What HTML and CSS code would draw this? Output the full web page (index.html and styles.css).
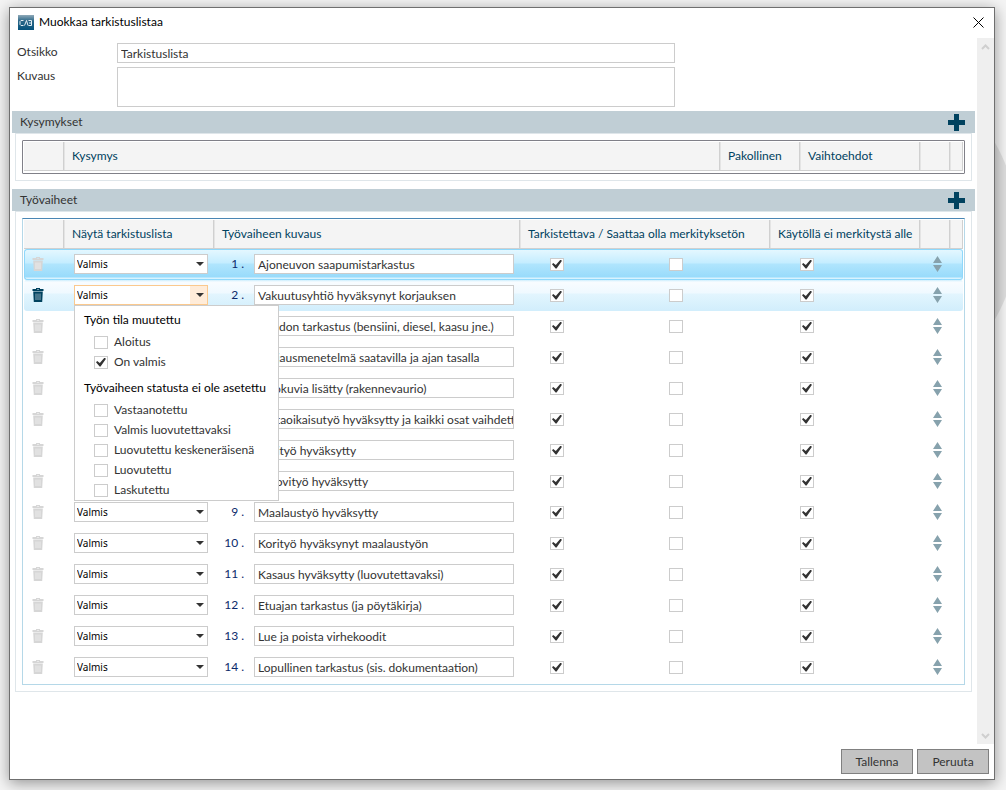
FILE: index.html
```html
<!DOCTYPE html>
<html lang="fi">
<head>
<meta charset="UTF-8">
<meta name="viewport" content="width=device-width, initial-scale=1">
<title>Muokkaa tarkistuslistaa</title>
<link rel="stylesheet" href="styles.css">
</head>
<body>
<svg class="symbols" aria-hidden="true">
  <symbol id="i-trash" viewBox="0 0 12 14">
    <path fill="currentColor" fill-rule="evenodd" d="M4 0h4v1h3.500v2H.500V1H4zM5 1v.600h2V1zM1.200 3.500h9.600L10.200 14H1.800z"/>
    <path stroke="#fff" stroke-opacity=".55" d="M4 5.500v6.500M6 5.500v6.500M8 5.500v6.500"/>
  </symbol>
  <symbol id="i-sort" viewBox="0 0 9 16">
    <path fill="currentColor" d="M4.500 0L9 7H0zM0 9h9L4.500 16z"/>
  </symbol>
  <symbol id="i-plus" viewBox="0 0 17 17">
    <path fill="currentColor" d="M6 0h5v6h6v5h-6v6H6v-6H0V6h6z"/>
  </symbol>
</svg>

<main class="dialog">
  <header class="titlebar">
    <svg class="logo" viewBox="0 0 16 15" aria-hidden="true">
      <defs>
        <linearGradient id="logo-bg" x1="0" y1="0" x2="0" y2="1">
          <stop offset="0" stop-color="#8fa9b8"/>
          <stop offset=".4" stop-color="#2b6788"/>
          <stop offset="1" stop-color="#04527b"/>
        </linearGradient>
      </defs>
      <rect width="16" height="15" fill="url(#logo-bg)"/>
      <path fill="none" stroke="#e4eef3" d="M5.500 5.500H3L2 6.500v3l1 1h2.500M6.500 10.500l2-5 1.500 5M10.500 5.500h3v5h-3M11 8h2.500"/>
    </svg>
    <h1>Muokkaa tarkistuslistaa</h1>
    <button class="close" type="button" aria-label="Sulje">
      <svg viewBox="0 0 11 11" width="11" height="11"><path stroke="#000" d="M.5.5l10 10M10.500.500l-10 10"/></svg>
    </button>
  </header>

  <div class="body">
    <div class="content">
      <form class="fields">
        <label for="otsikko">Otsikko</label>
        <input id="otsikko" type="text" value="Tarkistuslista">
        <label for="kuvaus">Kuvaus</label>
        <textarea id="kuvaus"></textarea>
      </form>

      <section class="section">
        <div class="section-head">
          <h2>Kysymykset</h2>
          <button class="add" type="button" aria-label="Lisää kysymys"><svg><use href="#i-plus"/></svg></button>
        </div>
        <div class="group">
          <div class="grid-box dark">
            <table>
              <colgroup>
                <col class="w40"><col><col class="w80"><col class="w120"><col class="w30"><col class="w13">
              </colgroup>
              <thead>
                <tr><th></th><th>Kysymys</th><th>Pakollinen</th><th>Vaihtoehdot</th><th></th><th></th></tr>
              </thead>
            </table>
          </div>
        </div>
      </section>

      <section class="section">
        <div class="section-head">
          <h2>Työvaiheet</h2>
          <button class="add" type="button" aria-label="Lisää työvaihe"><svg><use href="#i-plus"/></svg></button>
        </div>
        <div class="group">
          <div class="grid-box">
            <table>
              <colgroup>
                <col class="w40"><col class="w150"><col><col class="w250"><col class="w150"><col class="w30"><col class="w13">
              </colgroup>
              <thead>
                <tr><th></th><th>Näytä tarkistuslista</th><th>Työvaiheen kuvaus</th><th>Tarkistettava / Saattaa olla merkityksetön</th><th>Käytöllä ei merkitystä alle</th><th></th><th></th></tr>
              </thead>
              <tbody id="steps"></tbody>
            </table>
          </div>
        </div>
      </section>
    </div>

    <div class="scrollbar" aria-hidden="true">
      <svg viewBox="0 0 9 6" width="9" height="6"><path d="M1 5l3.500-3.500L8 5"/></svg>
      <svg viewBox="0 0 9 6" width="9" height="6"><path d="M1 1l3.500 3.500L8 1"/></svg>
    </div>
  </div>

  <footer class="footer">
    <button type="button">Tallenna</button>
    <button type="button">Peruuta</button>
  </footer>
</main>

<template id="status-menu">
  <div class="menu">
    <fieldset>
      <legend>Työn tila muutettu</legend>
      <label><input type="checkbox">Aloitus</label>
      <label><input type="checkbox" checked>On valmis</label>
    </fieldset>
    <fieldset>
      <legend>Työvaiheen statusta ei ole asetettu</legend>
      <label><input type="checkbox">Vastaanotettu</label>
      <label><input type="checkbox">Valmis luovutettavaksi</label>
      <label><input type="checkbox">Luovutettu keskeneräisenä</label>
      <label><input type="checkbox">Luovutettu</label>
      <label><input type="checkbox">Laskutettu</label>
    </fieldset>
  </div>
</template>

<script>
  const steps = [
    'Ajoneuvon saapumistarkastus',
    'Vakuutusyhtiö hyväksynyt korjauksen',
    'Vuodon tarkastus (bensiini, diesel, kaasu jne.)',
    'Korjausmenetelmä saatavilla ja ajan tasalla',
    'Valokuvia lisätty (rakennevaurio)',
    'Mittaoikaisutyö hyväksytty ja kaikki osat vaihdettu',
    'Korityö hyväksytty',
    'Muovityö hyväksytty',
    'Maalaustyö hyväksytty',
    'Korityö hyväksynyt maalaustyön',
    'Kasaus hyväksytty (luovutettavaksi)',
    'Etuajan tarkastus (ja pöytäkirja)',
    'Lue ja poista virhekoodit',
    'Lopullinen tarkastus (sis. dokumentaation)'
  ];
  const selectedRow = 1;
  const openRow = 2;
  const tbody = document.getElementById('steps');

  steps.forEach((text, i) => {
    const n = i + 1;
    const tr = document.createElement('tr');
    if (n === selectedRow) tr.className = 'selected';
    if (n === openRow) tr.className = 'active';
    tr.innerHTML = `
      <td><button class="trash" type="button" aria-label="Poista ${n}"><svg><use href="#i-trash"/></svg></button></td>
      <td><div class="combo"><select id="tila-${n}" aria-label="Näytä tarkistuslista ${n}"><option>Valmis</option></select></div></td>
      <td><div class="desc"><label for="kuvaus-${n}">${n} .</label><input id="kuvaus-${n}" type="text" value="${text}"></div></td>
      <td><div class="checks"><input type="checkbox" checked aria-label="Tarkistettava ${n}"><input type="checkbox" aria-label="Saattaa olla merkityksetön ${n}"></div></td>
      <td><div class="checks"><input type="checkbox" checked aria-label="Käytöllä ei merkitystä ${n}"></div></td>
      <td><button class="sort" type="button" aria-label="Siirrä ${n}"><svg><use href="#i-sort"/></svg></button></td>
      <td></td>`;
    tbody.appendChild(tr);
  });

  // pudotusvalikko avoimelle riville
  const menu = document.getElementById('status-menu').content.cloneNode(true);
  document.querySelector('.active .combo').appendChild(menu);
</script>
</body>
</html>
```
FILE: styles.css
```css
* {
  box-sizing: border-box;
}
body {
  margin: 0;
  padding: 7px 11px 10px 9px;
  min-height: 100vh;
  background: radial-gradient(circle 178px at calc(100% - 165px) 231px, #dedede 177px, #f4f4f4 178px);
  font: 12px/16px Lato, "Noto Sans", sans-serif;
  color: #333;
}
input, textarea, button, select {
  font: inherit;
  color: inherit;
  margin: 0;
}
button {
  padding: 0;
  border: 0;
  background: none;
}
svg {
  display: block;
}
.symbols {
  position: absolute;
  width: 0;
  height: 0;
}
.dialog {
  display: flex;
  flex-direction: column;
  min-height: calc(100vh - 17px);
  border: 1px solid #6f6f6f;
  background: #fff;
  box-shadow: 0 3px 14px rgba(0,0,0,0.4);
}

/* title */
.titlebar {
  display: flex;
  align-items: center;
  height: 30px;
  padding: 0 10px 2px 8px;
}
.logo {
  width: 16px;
  height: 15px;
  margin-right: 5px;
}
h1 {
  flex: 1;
  margin: 0;
  font-size: 12px;
  font-weight: 400;
  color: #000;
}

.body {
  flex: 1;
  display: flex;
}
.content {
  flex: 1;
  min-width: 0;
  padding: 5px 2px 0;
}
.scrollbar {
  display: flex;
  flex-direction: column;
  justify-content: space-between;
  align-items: center;
  width: 17px;
  padding: 6px 0 5px;
  background: #efefef;
}
.scrollbar path {
  fill: none;
  stroke: #cfcfcf;
  stroke-width: 2;
}

/* form fields */
.fields {
  display: grid;
  grid-template-columns: 100px 1fr;
  row-gap: 4px;
  margin-bottom: 4px;
  padding-left: 5px;
}
.fields label {
  padding-top: 1px;
}
input[type="text"], textarea {
  height: 20px;
  padding: 0 0 0 3px;
  border: 1px solid #ccc;
  border-radius: 0;
  background: #fff;
}
.fields input, .fields textarea {
  width: 100%;
  max-width: 558px;
}
textarea {
  display: block;
  height: 40px;
  resize: none;
}

/* sections */
.section {
  margin-bottom: 8px;
}
.section-head {
  display: flex;
  align-items: center;
  justify-content: space-between;
  height: 22px;
  padding: 0 10px 0 8px;
  background: #c0ced5;
}
h2 {
  margin: 0;
  font-size: 12px;
  font-weight: 400;
}
.add {
  color: #00425f;
}
.add svg {
  width: 17px;
  height: 17px;
}
.group {
  margin: 0 3px;
  padding: 6px;
  border: 1px solid #dfe6ea;
}
.grid-box {
  padding: 1px;
  border: 1px solid #b5d8e8;
  border-top-color: #4a86b4;
}
.grid-box.dark {
  padding-bottom: 2px;
  border-color: #808088;
  border-radius: 1px;
}

table {
  width: 100%;
  table-layout: fixed;
  border-spacing: 0;
}
.w13 { width: 13px; }
.w30 { width: 30px; }
.w40 { width: 40px; }
.w80 { width: 80px; }
.w120 { width: 120px; }
.w150 { width: 150px; }
.w250 { width: 250px; }
th {
  height: 29px;
  padding: 0 0 0 8px;
  border-right: 1px solid #d0d0d0;
  border-bottom: 1px solid #d0d0d0;
  background: #f4f4f4;
  font-weight: 400;
  text-align: left;
  white-space: nowrap;
  color: #00425f;
}
th + th {
  box-shadow: inset 1px 0 #e4e4e4;
}
td {
  height: 31px;
  padding: 0 0 1px;
}

/* highlighted rows */
.selected td {
  border: solid #8fd8fb;
  border-width: 1px 0;
  background: linear-gradient(#e4f7ff 0, #c4edff 13px, #b0e5fd 14px, #98dbfb 27px, #d8f3ff 28px);
}
.selected td:first-child {
  border-left-width: 1px;
  border-radius: 3px 0 0 3px;
}
.selected td:last-child {
  border-right-width: 1px;
  border-radius: 0 3px 3px 0;
}
.active td {
  background: linear-gradient(#cdeefd 0, #f8fcff 2px, #eff9ff 13px, #e2f5fe 14px, #d2eefc 30px);
}
.active td:first-child {
  border-radius: 3px 0 0 3px;
}
.active td:last-child {
  border-radius: 0 3px 3px 0;
}

.trash, .sort {
  display: block;
  margin: 0 auto;
}
.trash {
  margin-left: 8px;
  color: #d6d6d6;
}
.selected .trash {
  margin-left: 7px;
}
.active .trash {
  color: #00425f;
}
.trash svg {
  width: 12px;
  height: 14px;
}
.sort {
  padding-left: 4px;
  color: #87a2ad;
}
.sort svg {
  width: 9px;
  height: 16px;
}

.combo {
  position: relative;
  width: 134px;
  margin-left: 10px;
}
.combo select {
  display: block;
  width: 100%;
  height: 20px;
  padding: 0 2px;
  border: 1px solid #ccc;
  border-radius: 0;
  background: #fff;
  appearance: none;
  font: 10px "Noto Sans", sans-serif;
  color: #000;
}
.combo::after {
  content: "";
  position: absolute;
  top: 8px;
  right: 4px;
  border: solid transparent;
  border-width: 4px 4px 0;
  border-top-color: #333;
}
.active select {
  border-color: #fbc98e;
  background: linear-gradient(to right, #fff 115px, #ffecd9 115px);
}

/* drop-down menu */
.menu {
  position: absolute;
  z-index: 1;
  top: 100%;
  left: 0;
  width: 205px;
  padding: 4px 0 0 9px;
  border: 1px solid #ccc;
  background: #fff;
}
fieldset {
  margin: 0;
  padding: 0;
  border: 0;
}
fieldset + fieldset {
  margin-top: 6px;
}
legend {
  margin-bottom: 2px;
  padding: 0;
  line-height: 20px;
  white-space: nowrap;
  color: #000;
}
.menu label {
  display: flex;
  align-items: center;
  gap: 6px;
  height: 20px;
  padding-left: 10px;
}

.desc {
  display: flex;
  align-items: center;
  padding-right: 6px;
}
.desc label {
  width: 30px;
  margin-right: 10px;
  text-align: right;
  color: #0b2a6b;
}
.desc input {
  flex: 1;
  min-width: 0;
}

.checks {
  display: flex;
  gap: 105px;
  padding-left: 30px;
}
input[type="checkbox"] {
  appearance: none;
  flex: none;
  width: 14px;
  height: 13px;
  padding: 1px;
  border: 1px solid #ccc;
  background: #fff;
}
input[type="checkbox"]:checked::before {
  content: "";
  display: block;
  width: 10px;
  height: 9px;
  background: #333;
  clip-path: polygon(0 52%, 12% 38%, 38% 62%, 84% 2%, 100% 14%, 46% 100%, 36% 100%);
}

.footer {
  display: flex;
  justify-content: flex-end;
  gap: 4px;
  padding: 5px;
}
.footer button {
  width: 72px;
  height: 25px;
  border: 1px solid #808080;
  background: #c3c3c3;
}
```
